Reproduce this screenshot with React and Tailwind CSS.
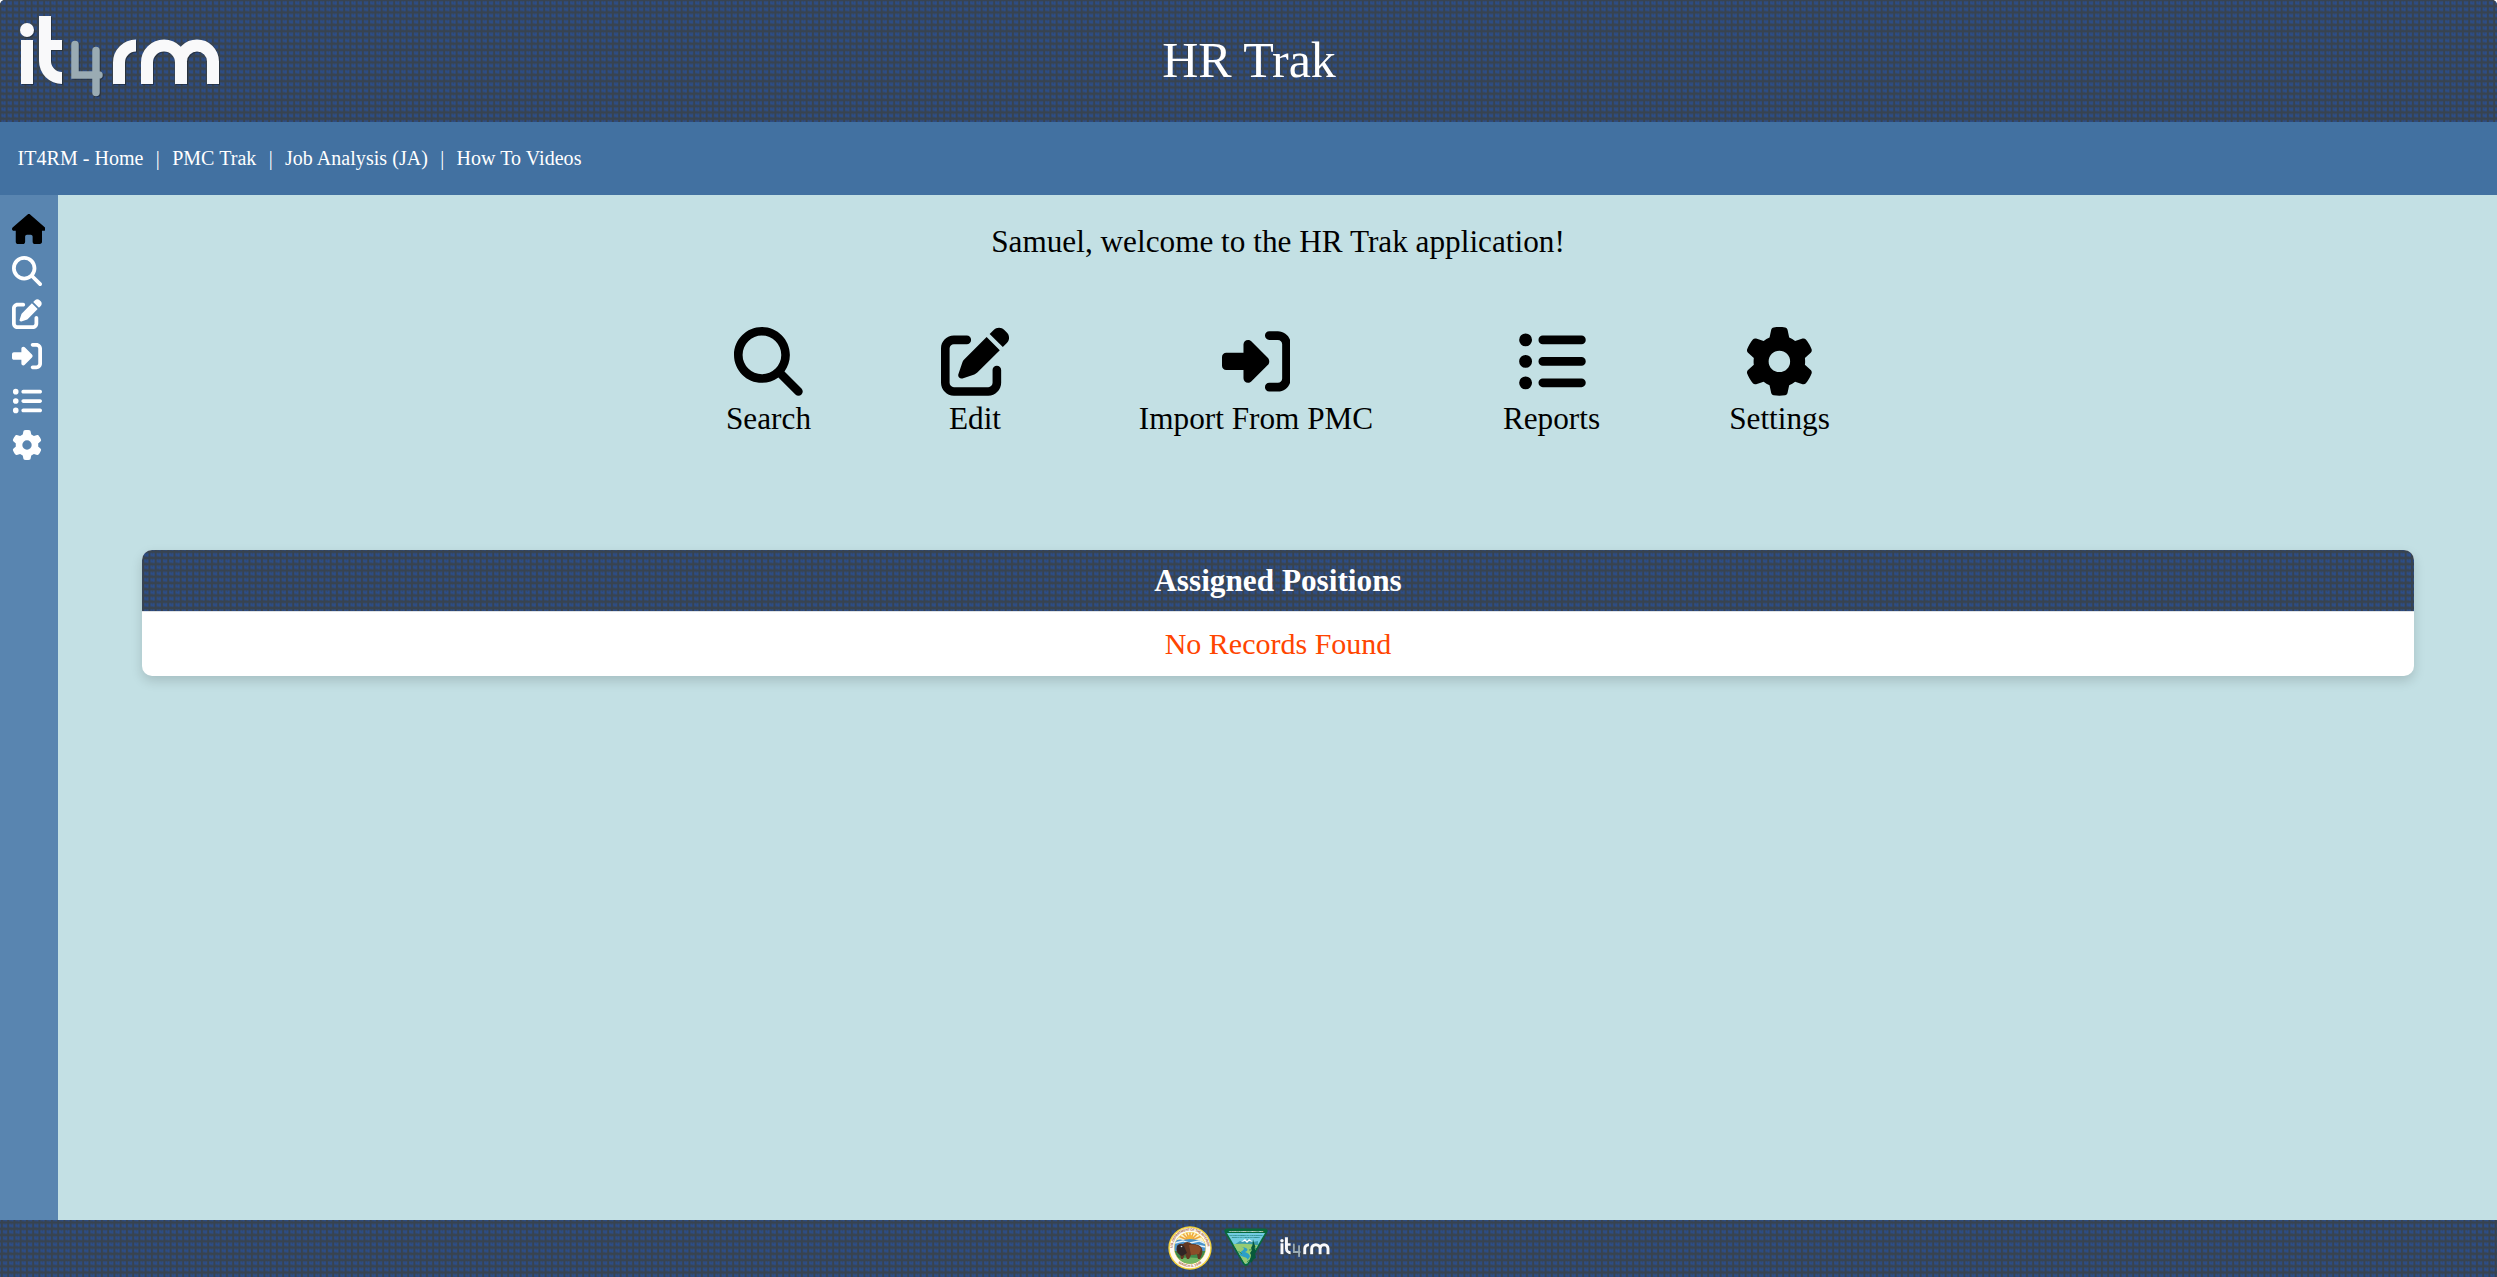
import React from "react";
import { FaHouse, FaMagnifyingGlass, FaPenToSquare, FaRightToBracket, FaListUl, FaGear } from "react-icons/fa6";

function Texture({ id, x = 0, y = 0 }) {
  return (
    <svg className="absolute inset-0 h-full w-full" aria-hidden="true">
      <defs>
        <pattern id={id} x={x} y={y} width="6.25" height="6.25" patternUnits="userSpaceOnUse">
          <rect width="6.25" height="6.25" fill="#38434f" />
          <rect x="1.100" y="1.200" width="4" height="3.800" fill="#31486f" />
          <path d="M1.800 1.300v2.100h2.700M4.400 1.300v3.700" stroke="#2b4e8c" strokeWidth="1.200" fill="none" />
        </pattern>
      </defs>
      <rect width="100%" height="100%" fill={`url(#${id})`} />
    </svg>
  );
}

const FOUR = "M75 44.500V75H99M96 50.500V92.500";
const R_AND_M = "M119 84V62.500A17 17 0 0 1 136 45.500M147 84V62.500A17 17 0 0 1 181 62.500V84M181 61.500A16 16 0 0 1 213 61.500V84";
const LETTER_T = "M39 16h12v24h11v10H51v11a11 11 0 0 0 11 11v12A23 23 0 0 1 39 61z";

function Logo({ className }) {
  return (
    <svg viewBox="0 0 202 84" className={className} role="img" aria-label="it4rm">
      <g transform="translate(-19 -15)">
        <g fill="#1c2733" opacity=".6" transform="translate(1 1)">
          <circle cx="27" cy="30" r="7" />
          <rect x="21" y="40" width="12" height="44" />
          <path d={LETTER_T} />
        </g>
        <path d={FOUR} transform="translate(1 1)" fill="none" stroke="#1c2733" strokeOpacity=".6" strokeWidth="7.500" strokeLinecap="round" />
        <path d={FOUR} fill="none" stroke="#9aabb3" strokeWidth="7.500" strokeLinecap="round" />
        <g fill="#f9f9fa">
          <circle cx="27" cy="30" r="7" />
          <rect x="21" y="40" width="12" height="44" />
          <path d={LETTER_T} />
        </g>
        <g fill="none" strokeWidth="12">
          <path d={R_AND_M} transform="translate(1 1)" stroke="#1c2733" strokeOpacity=".6" />
          <path d={R_AND_M} stroke="#f9f9fa" />
        </g>
      </g>
    </svg>
  );
}

function InteriorSeal() {
  return (
    <svg viewBox="0 0 44 44" className="size-11" role="img" aria-label="Department of the Interior">
      <defs>
        <path id="sealTop" d="M4.600 22a17.400 17.400 0 0 1 34.800 0" />
        <path id="sealBottom" d="M3 22a19 19 0 0 0 38 0" />
        <clipPath id="sealClip"><circle cx="22" cy="22" r="15.500" /></clipPath>
      </defs>
      <circle cx="22" cy="22" r="21.700" fill="#f3d33c" />
      <circle cx="22" cy="22" r="20.300" fill="#fffaf0" />
      <circle cx="22" cy="22" r="16" fill="#f3d33c" />
      <g clipPath="url(#sealClip)">
        <rect width="44" height="44" fill="#fbf2c8" />
        <path d="M22 15 8 9M22 15 12 5M22 15 17 3M22 15V3M22 15l5-12M22 15 32 5M22 15l14-6" stroke="#eda63c" strokeWidth="1.500" />
        <circle cx="22" cy="12" r="3" fill="#f6b53c" />
        <path d="M4 18q5-6 11-4l7-1 8 1 10 4v9H4z" fill="#4b93cc" />
        <path d="M7 17l8-2 7 2 9-2 7 3M28 19l10 2" stroke="#e5f3fa" strokeWidth="1.300" fill="none" />
        <path d="M4 25h36v16H4z" fill="#3f8a4c" />
        <path d="M7 33q15-3 30 0v8H7z" fill="#72b763" />
      </g>
      <path d="M9 20q2-3 6-2 4-4 9 0 7 0 9 3 2 2 1 7l-2 5h-2l-1-5-6 1-2 4h-2l-2-5-2 5h-2l-1-5q-5-1-3-8z" fill="#623722" />
      <path d="M21 19q10-1 12 4l-2 5-8 1z" fill="#8c4d28" />
      <path d="M9 20q3-3 7 0l3 7-5 3q-6-2-5-10z" fill="#302525" />
      <circle cx="13.500" cy="20.500" r=".8" fill="#ddd" />
      <g fill="#a66445" fontFamily="Liberation Sans" fontWeight="700">
        <text fontSize="3.400"><textPath href="#sealTop" textLength="53">U.S. DEPARTMENT OF THE INTERIOR</textPath></text>
        <text fontSize="3.400"><textPath href="#sealBottom" startOffset="50%" textAnchor="middle">MARCH 3, 1849</textPath></text>
      </g>
    </svg>
  );
}

function BlmEmblem() {
  return (
    <svg viewBox="0 0 44 39" className="h-[39px] w-11" role="img" aria-label="Bureau of Land Management">
      <defs><clipPath id="blmClip"><path d="M3 5H41L23.500 35Q22 37 20.500 35z" /></clipPath></defs>
      <path d="M3 .5H41Q45 1 43 5L25 36Q22 40 19 36L1 5Q-1 1 3 .5z" fill="#08683c" />
      <g clipPath="url(#blmClip)">
        <rect y="4" width="44" height="35" fill="#72cce1" />
        <path d="M10 17l6-4 3 1 5-3 5 3 5-1v7H9z" fill="#3c9cad" />
        <path d="m17 14 4-3 2 2 2-2 4 3-4-1-2 2-2-2z" fill="#fff" />
        <path d="M5 17q15-3 33 1v22H5z" fill="#96cb72" />
        <path d="M12 18q12 1 6 5t2 6-1 10l5-2q-2-4 1-7t-4-6q8-4-9-6z" fill="#2c9fc8" />
        <path d="M12 24q5-1 6 2M25 22q6 0 7-2M23 34q3-3 8-6" stroke="#3b9255" fill="none" />
      </g>
      <path d="m29 11 1 4 1.500 4-1 1 2 4-1.500 1 1 5-2 1-3 4-1-2 1-6-1-2 2-3-1-2 1.500-3z" fill="#07583a" />
      <g fontFamily="Liberation Sans" fontWeight="700" textAnchor="middle">
        <text x="22" y="3.800" fontSize="2.400" fill="#fff" textLength="34">NATIONAL SYSTEM OF PUBLIC LANDS</text>
        <text x="22" y="7.800" fontSize="2.100" fill="#087063" textLength="33">U.S. DEPARTMENT OF THE INTERIOR</text>
        <text x="22" y="10.300" fontSize="1.900" fill="#087063" textLength="28">BUREAU OF LAND MANAGEMENT</text>
      </g>
    </svg>
  );
}

const links = ["IT4RM - Home", "PMC Trak", "Job Analysis (JA)", "How To Videos"];

const actions = [
  { label: "Search", Icon: FaMagnifyingGlass, cell: "ml-[668px] w-[85px]" },
  { label: "Edit", Icon: FaPenToSquare, cell: "ml-[129px] w-[70px]" },
  { label: "Import From PMC", Icon: FaRightToBracket, cell: "ml-[129px] w-[234px]" },
  { label: "Reports", Icon: FaListUl, cell: "ml-[130px] w-[97px]" },
  { label: "Settings", Icon: FaGear, cell: "ml-[129px] w-[101px]" },
];

export default function App() {
  return (
    <div className="flex h-[1277px] w-[2497px] flex-col overflow-hidden bg-white font-['Liberation_Serif',serif] text-black">
      <header className="relative flex h-[122px] shrink-0 items-center justify-center overflow-hidden rounded-t-[5px] bg-[#38434f]">
        <Texture id="headerTexture" x={0.4} />
        <Logo className="absolute left-[19px] top-[15px] h-[84px] w-[202px]" />
        <h1 className="relative -mt-0.5 pl-px text-[50px] leading-none text-white">HR Trak</h1>
      </header>
      <nav className="flex h-[73px] shrink-0 items-center bg-[#4271a1] pb-0.5 pl-[17.5px] text-[20px] tracking-[0.04px] text-white">
        {links.map((link, i) => (
          <React.Fragment key={link}>
            {i > 0 && <span className="w-[28.6px] text-center">|</span>}
            <a>{link}</a>
          </React.Fragment>
        ))}
      </nav>
      <div className="flex min-h-0 flex-1 bg-[#c3e0e4]">
        <aside className="flex w-[58px] shrink-0 flex-col bg-[#5985b0] pl-[11.5px] pt-[19px] text-[30px] text-white">
          <FaHouse className="h-[30px] w-[33.75px] text-black" />
          <FaMagnifyingGlass className="mt-3" />
          <FaPenToSquare className="mt-[13px]" />
          <FaRightToBracket className="mt-[12px]" />
          <FaListUl className="mt-[15px]" />
          <FaGear className="mt-[14px]" />
        </aside>
        <main className="flex flex-1 flex-col">
          <p className="mt-[29px] pl-px text-center text-[31.25px] leading-[36px]">Samuel, welcome to the HR Trak application!</p>
          <div className="mt-[67px] flex">
            {actions.map(({ label, Icon, cell }) => (
              <div key={label} className={`flex shrink-0 flex-col items-center ${cell}`}>
                <Icon className="size-[68.75px]" />
                <span className="mt-[5px] whitespace-nowrap text-[31.25px] leading-[36px]">{label}</span>
              </div>
            ))}
          </div>
          <section className="ml-[84px] mr-[83px] mt-[113px] h-[126px] overflow-hidden rounded-[10px] bg-white text-center text-[30px] shadow-[0_5px_12px_rgba(0,0,0,0.15)]">
            <div className="relative flex h-[62px] items-center justify-center border-b border-[#dee2e6] text-white">
              <Texture id="cardTexture" x={1.2} y={1.8} />
              <h2 className="relative text-[31.25px] font-bold leading-none">Assigned Positions</h2>
            </div>
            <p className="flex h-[64px] items-center justify-center text-[#ff4500]">No Records Found</p>
          </section>
        </main>
      </div>
      <footer className="relative flex h-[57px] shrink-0 justify-center bg-[#38434f]">
        <Texture id="footerTexture" x={1.9} y={2.6} />
        <div className="relative flex items-start pl-px pt-[6px]">
          <InteriorSeal />
          <div className="ml-3 mt-[2px]"><BlmEmblem /></div>
          <Logo className="ml-3 mt-[11px] h-[21px] w-[50px]" />
        </div>
      </footer>
    </div>
  );
}
